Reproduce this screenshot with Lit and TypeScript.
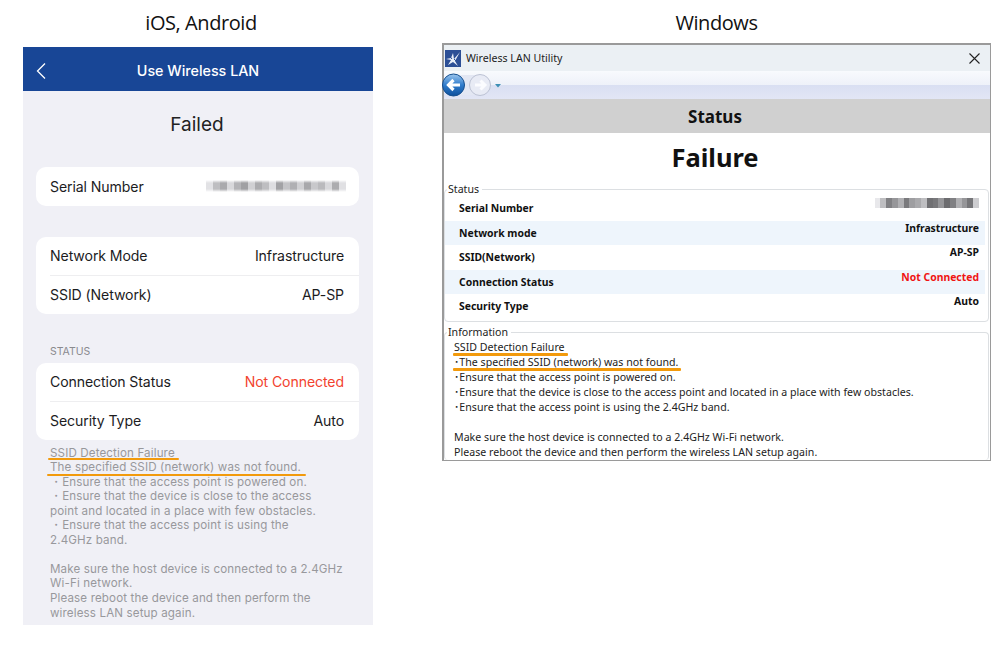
import { LitElement, css, html } from "lit";
import { customElement } from "lit/decorators.js";

// grey levels for the pixelated (censored) serial numbers
const PHONE_SERIAL = [226, 190, 170, 216, 180, 160, 208, 172, 190, 222, 162, 196, 176, 208, 168, 200, 186, 216, 172, 224];
const WIN_SERIAL = [232, 190, 128, 150, 176, 122, 158, 170, 190, 112, 120, 150, 108, 128, 176, 150, 118, 205];

const blocks = (levels: number[]) =>
  levels.map((l) => html`<i style="background: rgb(${l},${l},${l + 3})"></i>`);

@customElement("app-root")
export class AppRoot extends LitElement {
  static styles = css`
    :host {
      display: block;
      width: 1001px;
      height: 667px;
      background: #fff;
      overflow: hidden;
    }
    .page {
      display: flex;
      align-items: flex-start;
      padding-left: 23px;
      gap: 69px;
    }
    .col-title {
      font-family: "Open Sans", sans-serif;
      font-size: 20px;
      letter-spacing: -0.43px;
      color: #111;
      text-align: center;
      line-height: 45px;
    }
    .left { width: 350px; }
    .left .col-title { height: 47px; padding-left: 6px; box-sizing: border-box; }
    .right { width: 549px; }
    .right .col-title { height: 43px; }

    /* phone */
    .phone {
      height: 578px;
      background: #f0f0f6;
      font-family: Inter, sans-serif;
      color: #1c1c1e;
      display: flex;
      flex-direction: column;
    }
    .nav {
      height: 44px;
      box-sizing: border-box;
      padding-top: 2px;
      flex: none;
      background: #184696;
      color: #fff;
      font-size: 14.3px;
      font-weight: 500;
      display: flex;
      align-items: center;
      justify-content: center;
      position: relative;
    }
    .nav svg { position: absolute; left: 13px; top: 16px; }
    .failed {
      font-size: 19px;
      text-align: center;
      line-height: 24px;
      padding: 22px 2px 0 0;
      height: 54px;
      color: #222;
    }
    .card {
      margin: 0 14px 0 13px;
      background: #fff;
      border-radius: 10px;
    }
    .phone-row {
      height: 38.5px;
      display: flex;
      align-items: center;
      justify-content: space-between;
      padding: 0 15px 0 14px;
      font-size: 14.1px;
      letter-spacing: -0.1px;
    }
    .phone-row + .phone-row {
      margin-left: 14px;
      padding-left: 0;
      box-shadow: inset 0 1px 0 #eeeef0;
    }
    .gap-32 { margin-top: 31px; }
    .caption {
      margin: 32px 0 0 27px;
      height: 17px;
      font-size: 10.5px;
      line-height: 12px;
      color: #8a8a8e;
    }
    .red { color: #f2432f; }
    .serial { display: flex; height: 12px; }
    .serial i { display: block; flex: none; }
    .phone .serial {
      margin-right: -2px;
      -webkit-mask-image: linear-gradient(transparent, #000 25%, #000 75%, transparent);
      mask-image: linear-gradient(transparent, #000 25%, #000 75%, transparent);
    }
    .phone .serial i { width: 7px; }
    .notes {
      position: relative;
      margin: 6px 10px 0 27px;
      font-size: 11.6px;
      line-height: 14.55px;
      letter-spacing: 0.13px;
      color: #98989c;
    }
    .notes p { margin: 0; }
    .notes .blank { height: 14.55px; }
    .mark {
      position: absolute;
      height: 2.5px;
      border-radius: 1px;
      background: #f29a0c;
    }
    .mark.p1 { left: -2px; top: 12px; width: 131px; }
    .mark.p2 { left: -3px; top: 28px; width: 259px; }

    /* windows utility */
    .window {
      height: 418px;
      box-sizing: border-box;
      border: 1px solid #9a9a9a;
      border-top-width: 2px;
      border-left-width: 2px;
      font-family: "Noto Sans", "Noto Sans CJK JP", sans-serif;
      color: #111;
      background: #fff;
      display: flex;
      flex-direction: column;
    }
    .titlebar {
      height: 26px;
      flex: none;
      background: #ebf0f4;
      display: flex;
      align-items: center;
      padding: 0 10px 0 1px;
      gap: 5px;
      font-size: 10.6px;
      color: #222;
    }
    .titlebar span { flex: 1; }
    .toolbar {
      height: 28px;
      flex: none;
      background: linear-gradient(#f8fafd 0, #eef1f9 50%, #d9dff2 50%, #e2e6f5 100%);
      display: flex;
      align-items: center;
    }
    .toolbar svg { margin-left: -2px; }
    .band {
      height: 34px;
      flex: none;
      box-sizing: border-box;
      padding-right: 4px;
      background: #d0d0d0;
      text-align: center;
      font-size: 17px;
      font-weight: 700;
      line-height: 35px;
    }
    .headline {
      height: 50px;
      flex: none;
      box-sizing: border-box;
      padding-right: 4px;
      text-align: center;
      font-size: 25.5px;
      font-weight: 700;
      line-height: 48px;
    }
    fieldset {
      margin: 0 1px 0 0;
      padding: 0;
      border: 1px solid #dcdfe2;
      border-radius: 4px;
      min-width: 0;
    }
    legend {
      margin-left: 2px;
      padding: 0 3px 0 1px;
      font-size: 10.6px;
      line-height: 12px;
      color: #222;
    }
    .status { height: 139px; box-sizing: border-box; padding-top: 1px; flex: none; }
    .win-row {
      height: 24.5px;
      display: flex;
      justify-content: space-between;
      margin-right: 3px;
      padding: 0 6px 0 14px;
      font-size: 10.4px;
      font-weight: 700;
    }
    .win-row:nth-child(odd) { background: #eef5fc; }
    .win-row .k { line-height: 24px; }
    .win-row .v { line-height: 14px; }
    .win-row .red { color: #f01414; }
    .win-row .serial { margin-top: 2px; height: 10px; }
    .win-row .serial i { width: 5.8px; }
    .info {
      flex: 1;
      margin-top: 4px;
      border-bottom: none;
    }
    .info-text {
      position: relative;
      padding: 2px 0 0 9px;
      font-size: 10.6px;
      line-height: 15px;
      letter-spacing: 0.02px;
      color: #222;
    }
    .info-text p { margin: 0; }
    .info-text .blank { height: 15px; }
    .mark.w1 { left: 8px; top: 15px; width: 115px; }
    .mark.w2 { left: 8px; top: 30px; width: 228px; }
  `;

  render() {
    return html`
      <div class="page">
        <section class="left">
          <div class="col-title">iOS, Android</div>
          <div class="phone">
            <div class="nav">
              <svg width="10" height="16" viewBox="0 0 10 16" fill="none" stroke="#fff" stroke-width="1.3">
                <path d="M9 0.5 L1.5 8 L9 15.5" />
              </svg>
              Use Wireless LAN
            </div>
            <div class="failed">Failed</div>
            <div class="card">
              <div class="phone-row">
                <span>Serial Number</span>
                <span class="serial">${blocks(PHONE_SERIAL)}</span>
              </div>
            </div>
            <div class="card gap-32">
              <div class="phone-row"><span>Network Mode</span><span>Infrastructure</span></div>
              <div class="phone-row"><span>SSID (Network)</span><span>AP-SP</span></div>
            </div>
            <div class="caption">STATUS</div>
            <div class="card">
              <div class="phone-row"><span>Connection Status</span><span class="red">Not Connected</span></div>
              <div class="phone-row"><span>Security Type</span><span>Auto</span></div>
            </div>
            <div class="notes">
              <p>SSID Detection Failure</p>
              <p>The specified SSID (network) was not found.</p>
              <p>・Ensure that the access point is powered on.</p>
              <p>・Ensure that the device is close to the access<br />point and located in a place with few obstacles.</p>
              <p>・Ensure that the access point is using the<br />2.4GHz band.</p>
              <div class="blank"></div>
              <p>Make sure the host device is connected to a 2.4GHz<br />Wi-Fi network.</p>
              <p>Please reboot the device and then perform the<br />wireless LAN setup again.</p>
              <div class="mark p1"></div>
              <div class="mark p2"></div>
            </div>
          </div>
        </section>

        <section class="right">
          <div class="col-title">Windows</div>
          <div class="window">
            <div class="titlebar">
              <svg width="16" height="17" viewBox="0 0 16 17">
                <rect width="16" height="17" fill="#2c4f96" />
                <path d="M1 9 L6 8 L8 3 L9 9 L15 2 L10 11 L13 16 L8 12 L3 15 L6 10 Z" fill="#e8eef8" />
                <path d="M2 3 L7 9 M9 9 L14 14" stroke="#2c4f96" stroke-width="1" />
              </svg>
              <span>Wireless LAN Utility</span>
              <svg width="11" height="11" viewBox="0 0 11 11" fill="none" stroke="#222" stroke-width="1.1">
                <path d="M0.5 0.5 L10.5 10.5 M10.5 0.5 L0.5 10.5" />
              </svg>
            </div>
            <div class="toolbar">
              <svg width="62" height="24" viewBox="0 0 62 24">
                <defs>
                  <linearGradient id="backFill" x1="0" y1="0" x2="0" y2="1">
                    <stop offset="0" stop-color="#9cc6ee" />
                    <stop offset="0.5" stop-color="#2f7ccc" />
                    <stop offset="1" stop-color="#0d4f9c" />
                  </linearGradient>
                </defs>
                <rect x="11" y="2" width="27" height="20" fill="#e3e7f3" />
                <circle cx="38" cy="12" r="10.5" fill="#e8ebf5" stroke="#bcc2d4" />
                <path d="M33 12 H43 M38.5 7.5 L43 12 L38.5 16.5" fill="none" stroke="#fbfcff" stroke-width="3" />
                <circle cx="11.5" cy="12" r="11" fill="url(#backFill)" stroke="#164f8e" />
                <path d="M18 12 H7 M11.5 7 L6.5 12 L11.5 17" fill="none" stroke="#fff" stroke-width="3.2" />
                <path d="M53 11 H59 L56 14.5 Z" fill="#3d8fb5" />
              </svg>
            </div>
            <div class="band">Status</div>
            <div class="headline">Failure</div>
            <fieldset class="status">
              <legend>Status</legend>
              <div class="win-row">
                <span class="k">Serial Number</span>
                <span class="serial" style="filter: blur(0.5px)">${blocks(WIN_SERIAL)}</span>
              </div>
              <div class="win-row"><span class="k">Network mode</span><span class="v">Infrastructure</span></div>
              <div class="win-row"><span class="k">SSID(Network)</span><span class="v">AP-SP</span></div>
              <div class="win-row"><span class="k">Connection Status</span><span class="v red">Not Connected</span></div>
              <div class="win-row"><span class="k">Security Type</span><span class="v">Auto</span></div>
            </fieldset>
            <fieldset class="info">
              <legend>Information</legend>
              <div class="info-text">
                <p>SSID Detection Failure</p>
                <p>･The specified SSID (network) was not found.</p>
                <p>･Ensure that the access point is powered on.</p>
                <p>･Ensure that the device is close to the access point and located in a place with few obstacles.</p>
                <p>･Ensure that the access point is using the 2.4GHz band.</p>
                <div class="blank"></div>
                <p>Make sure the host device is connected to a 2.4GHz Wi-Fi network.</p>
                <p>Please reboot the device and then perform the wireless LAN setup again.</p>
                <div class="mark w1"></div>
                <div class="mark w2"></div>
              </div>
            </fieldset>
          </div>
        </section>
      </div>
    `;
  }
}
